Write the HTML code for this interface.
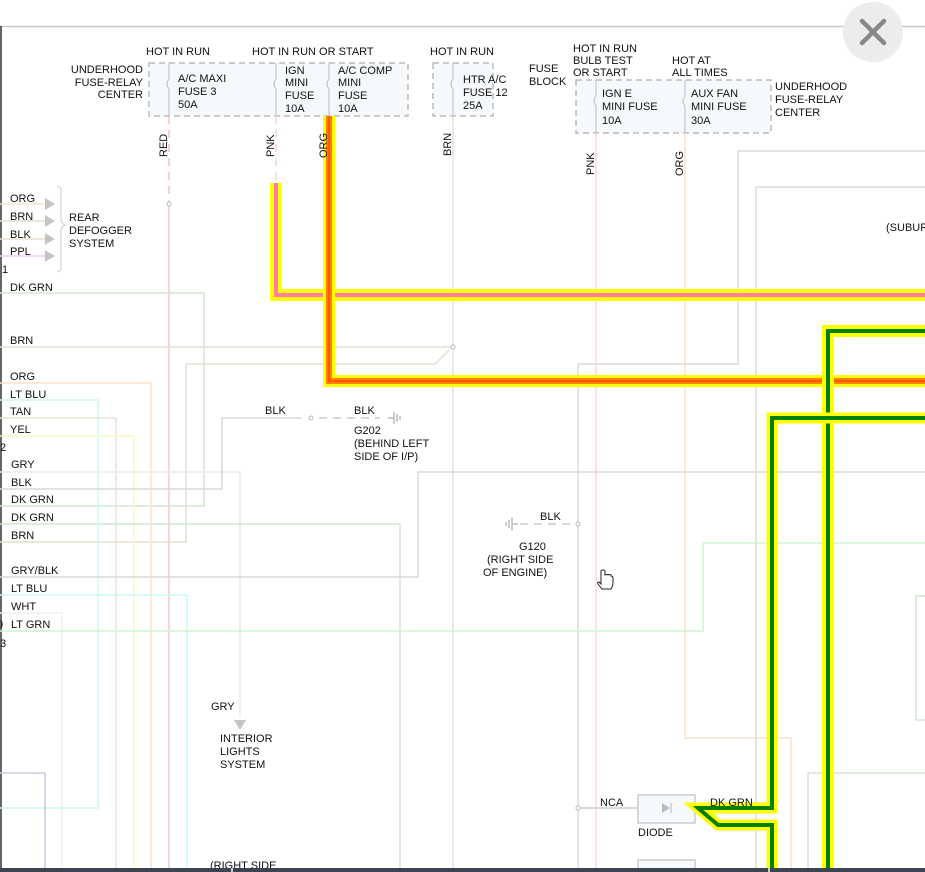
<!DOCTYPE html>
<html><head><meta charset="utf-8"><style>
html,body{margin:0;padding:0;background:#fff;width:925px;height:872px;overflow:hidden}
svg{display:block}
text{font-family:"Liberation Sans",Arial,sans-serif;font-size:11px;fill:#111}
</style></head><body>
<svg width="925" height="872" viewBox="0 0 925 872" xmlns="http://www.w3.org/2000/svg">
<rect width="925" height="872" fill="#fff"/>
<line x1="0" y1="26.5" x2="925" y2="26.5" stroke="#c8c8c8" stroke-width="1.5"/>
<line x1="1" y1="26" x2="1" y2="872" stroke="#333" stroke-width="1.5"/>

<g fill="#f6f9fc" stroke="#bbb" stroke-width="1.5" stroke-dasharray="6,4">
<rect x="149" y="63" width="259" height="53"/>
<rect x="433" y="63" width="60" height="53"/>
<rect x="576" y="80" width="195" height="53"/>
</g>
<g stroke="#bbb" fill="none" stroke-width="1">
<path d="M169 63V79q-4 5 0 10v27"/>
<path d="M276 63V79q-4 5 0 10v27"/>
<path d="M329 63V79q-4 5 0 10v27"/>
<path d="M453 63V79q-4 5 0 10v27"/>
<path d="M596 80V96q-4 5 0 10v27"/>
<path d="M685 80V96q-4 5 0 10v27"/>
</g>

<g fill="none" stroke-width="1.5">
<path d="M169 116V205" stroke="#f7c4c4" stroke-dasharray="8,6"/>
<path d="M169 205V872" stroke="#f9c8c8"/>
<path d="M276 116V205" stroke="#f7d0dc" stroke-dasharray="8,6"/>
<path d="M453 116V872" stroke="#e6ded0"/>
<path d="M596 133V872" stroke="#fbd8de"/>
<path d="M685 133V738H791V872" stroke="#fde2cc"/>
<path d="M925 151H738V364H578V872" stroke="#dcdcdc"/>
<path d="M925 187H756V872" stroke="#dcdcdc"/>
<path d="M0 293H204V506H0" stroke="#d4e6d4"/>
<path d="M0 347H453" stroke="#e6ded0"/>
<path d="M0 542H186V364H435L449 350" stroke="#e6ded0"/>
<path d="M0 383H151V872" stroke="#fde2cc"/>
<path d="M0 400H98V808H0" stroke="#c6f8f8"/>
<path d="M0 418H116V872" stroke="#e8e4d8"/>
<path d="M0 436H134V872" stroke="#fafac0"/>
<path d="M0 472H240V718" stroke="#ececec"/>
<path d="M0 489H222V418H302" stroke="#d8d8d8"/>
<path d="M0 524H400V872" stroke="#d4e6d4"/>
<path d="M0 577H418V472H925" stroke="#d8d8d8"/>
<path d="M0 595H187V872" stroke="#c6f8f8"/>
<path d="M0 613H62V872" stroke="#f0f0f0"/>
<path d="M0 631H703V543H925" stroke="#d0f4d0"/>
<path d="M0 773H45V872" stroke="#c8cce0"/>
<path d="M925 773H808V872" stroke="#d4e6d4"/>
<path d="M925 596H916V720H925" stroke="#d4e6d4"/>
<path d="M319 418H380" stroke="#ccc" stroke-dasharray="8,6"/>
<path d="M520 524H578" stroke="#ccc" stroke-dasharray="8,6"/>
<path d="M578 808H638" stroke="#ccc"/>
<path d="M0 221H45M0 239H45" stroke="#e6ded0"/>
<path d="M0 204H45" stroke="#fde2cc"/>
<path d="M0 256H45" stroke="#f8c8f8"/>
</g>
<g fill="#fff" stroke="#bbb" stroke-width="1">
<circle cx="169" cy="204" r="2"/><circle cx="276" cy="204" r="2"/>
<circle cx="453" cy="347" r="2"/><circle cx="311" cy="418" r="2"/>
<circle cx="578" cy="524" r="2"/><circle cx="578" cy="808" r="2"/>
</g>
<g stroke="#bbb" stroke-width="1.5">
<path d="M388 418h6M394 412v12M397 414v8M400 416v4"/>
<path d="M518 524h-6M512 518v12M509 520v8M506 522v4"/>
</g>
<g fill="#c4c4c4">
<path d="M45 198l10 6-10 6z"/><path d="M45 215l10 6-10 6z"/><path d="M45 233l10 6-10 6z"/><path d="M45 250l10 6-10 6z"/>
<path d="M234 720h12l-6 10z"/>
</g>
<path d="M57 186q4 1 4 4v30q0 3 4 5q-4 2-4 5v38q0 3-4 4" fill="none" stroke="#ccc"/>

<rect x="638" y="795" width="57" height="28" fill="#f6f9fc" stroke="#ccc" stroke-width="1.5"/>
<path d="M662 803l8 5-8 5z" fill="#bbb"/><path d="M671 803v10" stroke="#bbb"/>
<rect x="638" y="860" width="57" height="14" fill="#f6f9fc" stroke="#ccc" stroke-width="1.5"/>

<g fill="none" stroke-linejoin="miter">
<path d="M276 183V295H925" stroke="#ffff00" stroke-width="12"/>
<path d="M276 183V295H925" stroke="#ff7fa0" stroke-width="4"/>
<path d="M329 116V381H925" stroke="#ffff00" stroke-width="12"/>
<path d="M329 116V381H925" stroke="#ff8000" stroke-width="6"/>
<path d="M329 116V381H925" stroke="#ff5a00" stroke-width="2"/>
<path d="M828 872V331H925" stroke="#ffff00" stroke-width="12"/>
<path d="M828 872V331H925" stroke="#008000" stroke-width="4"/>
<path d="M925 418H772V808H698L718 825H772V872" stroke="#ffff00" stroke-width="11"/>
<path d="M925 418H772V808H698L718 825H772V872" stroke="#008000" stroke-width="4"/>
</g>

<text x="146" y="55">HOT IN RUN</text>
<text x="252" y="55">HOT IN RUN OR START</text>
<text x="430" y="55">HOT IN RUN</text>
<text x="143" y="73" text-anchor="end">UNDERHOOD</text>
<text x="143" y="86" text-anchor="end">FUSE-RELAY</text>
<text x="143" y="98" text-anchor="end">CENTER</text>
<text x="178" y="82">A/C MAXI</text><text x="178" y="95">FUSE 3</text><text x="178" y="108">50A</text>
<text x="285" y="74">IGN</text><text x="285" y="86">MINI</text><text x="285" y="99">FUSE</text><text x="285" y="112">10A</text>
<text x="338" y="74">A/C COMP</text><text x="338" y="86">MINI</text><text x="338" y="99">FUSE</text><text x="338" y="112">10A</text>
<text x="463" y="83">HTR A/C</text><text x="463" y="96">FUSE 12</text><text x="463" y="109">25A</text>
<text x="529" y="72">FUSE</text><text x="529" y="85">BLOCK</text>
<text x="573" y="52">HOT IN RUN</text><text x="573" y="64">BULB TEST</text><text x="573" y="76">OR START</text>
<text x="672" y="64">HOT AT</text><text x="672" y="76">ALL TIMES</text>
<text x="602" y="97">IGN E</text><text x="602" y="110">MINI FUSE</text><text x="602" y="124">10A</text>
<text x="691" y="97">AUX FAN</text><text x="691" y="110">MINI FUSE</text><text x="691" y="124">30A</text>
<text x="775" y="90">UNDERHOOD</text><text x="775" y="103">FUSE-RELAY</text><text x="775" y="116">CENTER</text>
<text transform="translate(167,157) rotate(-90)">RED</text>
<text transform="translate(274,157) rotate(-90)">PNK</text>
<text transform="translate(327,158) rotate(-90)">ORG</text>
<text transform="translate(451,156) rotate(-90)">BRN</text>
<text transform="translate(594,175) rotate(-90)">PNK</text>
<text transform="translate(683,176) rotate(-90)">ORG</text>
<text x="886" y="231">(SUBUR</text>
<text x="10" y="202">ORG</text><text x="10" y="220">BRN</text><text x="10" y="238">BLK</text><text x="10" y="255">PPL</text>
<text x="69" y="221">REAR</text><text x="69" y="234">DEFOGGER</text><text x="69" y="247">SYSTEM</text>
<text x="2" y="273" font-size="10">1</text>
<text x="10" y="291">DK GRN</text>
<text x="10" y="344">BRN</text>
<text x="10" y="380">ORG</text><text x="10" y="398">LT BLU</text><text x="10" y="415">TAN</text><text x="10" y="433">YEL</text>
<text x="0" y="451" font-size="10">2</text>
<text x="11" y="468">GRY</text><text x="11" y="486">BLK</text><text x="11" y="503">DK GRN</text><text x="11" y="521">DK GRN</text><text x="11" y="539">BRN</text>
<text x="11" y="574">GRY/BLK</text><text x="11" y="592">LT BLU</text><text x="11" y="610">WHT</text><text x="11" y="628">LT GRN</text>
<text x="-3" y="628" font-size="10">0</text><text x="0" y="647" font-size="10">3</text>
<text x="265" y="414">BLK</text><text x="354" y="414">BLK</text>
<text x="354" y="434">G202</text><text x="354" y="447">(BEHIND LEFT</text><text x="354" y="460">SIDE OF I/P)</text>
<text x="540" y="520">BLK</text>
<text x="519" y="550">G120</text><text x="487" y="563">(RIGHT SIDE</text><text x="483" y="576">OF ENGINE)</text>
<text x="211" y="710">GRY</text>
<text x="220" y="742">INTERIOR</text><text x="220" y="755">LIGHTS</text><text x="220" y="768">SYSTEM</text>
<text x="600" y="806">NCA</text><text x="710" y="806">DK GRN</text>
<text x="638" y="836">DIODE</text>
<text x="210" y="869">(RIGHT SIDE</text>

<path d="M601 571v13l-2-2q-2 0-1 2l4 5h9q2-3 2-7v-4q0-2-2-2v-1q-2-1-3 0q-1-1-3 0v-4q0-1-2-1q-2 0-2 1z" fill="#fff" stroke="#222" stroke-width="1"/>

<circle cx="873" cy="32" r="30" fill="#ececec"/>
<path d="M862 21l22 22M884 21l-22 22" stroke="#888" stroke-width="4.5" stroke-linecap="round"/>

<rect x="0" y="868" width="925" height="4" fill="#3d4451"/>
<rect x="231" y="868" width="2" height="4" fill="#ccc"/>
<rect x="768" y="868" width="2" height="4" fill="#ccc"/>
</svg>
</body></html>
